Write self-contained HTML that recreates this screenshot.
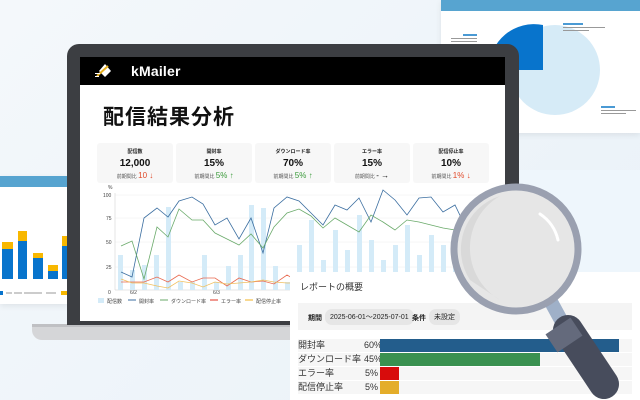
<!DOCTYPE html>
<html><head><meta charset="utf-8"><style>
*{margin:0;padding:0;box-sizing:border-box}
body{width:640px;height:400px;overflow:hidden;position:relative;background:linear-gradient(135deg,#f4f8fb,#e9f1f8);font-family:"Liberation Sans","Noto Sans CJK JP",sans-serif;color:#222}
.abs{position:absolute}
.card{background:#f7f7f7;border-radius:3px;text-align:center;font-size:5px}
.card .t{margin-top:5px;font-weight:bold}
.card .v{font-size:10px;margin-top:3px;font-weight:bold;color:#111}
.card .s{margin-top:2px;font-size:5px;color:#555}
.card .s b{font-size:8px;font-weight:normal}
.row{position:absolute;left:298px;width:334px;height:13px;background:#f6f6f6;font-size:9px;line-height:13px;color:#333}
.row span.p{position:absolute;left:66px;width:14px;text-align:right;font-size:9px}
.row i{position:absolute;left:82px;top:0;height:13px}
</style></head><body>
<!-- top-right card -->
<div class="abs" style="left:441px;top:0;width:199px;height:133px;background:#fff;box-shadow:0 2px 6px rgba(0,0,0,.08)">
 <div style="height:11px;background:#57a4d0"></div>
 <svg class="abs" style="left:0;top:0" width="199" height="133">
  <circle cx="114" cy="70" r="45" fill="#d6ebf7"/>
  <path d="M 102 25 L 102 70 L 48 70 A 45 45 0 0 1 102 25 Z" fill="#0874cc"/>
  <rect x="22" y="34" width="14" height="2" fill="#4a9ad4"/><rect x="10" y="38" width="26" height="1" fill="#999"/><rect x="10" y="41" width="26" height="1" fill="#999"/>
  <rect x="122" y="23" width="20" height="2" fill="#4a9ad4"/><rect x="122" y="27" width="42" height="1" fill="#999"/><rect x="122" y="30" width="26" height="1" fill="#999"/>
  <rect x="160" y="106" width="14" height="2" fill="#4a9ad4"/><rect x="160" y="110" width="35" height="1" fill="#999"/><rect x="160" y="113" width="25" height="1" fill="#999"/>
 </svg>
</div>
<!-- left card -->
<div class="abs" style="left:0;top:176px;width:68px;height:128px;background:#fff;box-shadow:0 2px 6px rgba(0,0,0,.08)">
 <div style="height:11px;background:#57a4d0"></div>
 <svg class="abs" style="left:0;top:0" width="68" height="128">
  <rect x="2" y="66" width="11" height="7" fill="#f8b800"/><rect x="2" y="73" width="11" height="30" fill="#0874cc"/>
  <rect x="18" y="55" width="9" height="10" fill="#f8b800"/><rect x="18" y="65" width="9" height="38" fill="#0874cc"/>
  <rect x="33" y="77" width="10" height="5" fill="#f8b800"/><rect x="33" y="82" width="10" height="21" fill="#0874cc"/>
  <rect x="48" y="89" width="10" height="6" fill="#f8b800"/><rect x="48" y="95" width="10" height="8" fill="#0874cc"/>
  <rect x="62" y="60" width="6" height="10" fill="#f8b800"/><rect x="62" y="70" width="6" height="33" fill="#0874cc"/>
  <rect x="0" y="115" width="3" height="4" fill="#0874cc"/><rect x="6" y="116" width="6" height="2" fill="#ccc"/><rect x="14" y="116" width="8" height="2" fill="#ccc"/><rect x="24" y="116" width="18" height="2" fill="#ccc"/><rect x="46" y="116" width="10" height="2" fill="#ccc"/><rect x="61" y="115" width="7" height="4" fill="#f8b800"/>
 </svg>
</div>
<!-- laptop base -->
<div class="abs" style="left:32px;top:324px;width:300px;height:16px;background:#d5d6d8;border-radius:0 0 10px 10px"></div>
<div class="abs" style="left:32px;top:324px;width:300px;height:3px;background:#bfc0c3"></div>
<!-- bezel -->
<div class="abs" style="left:67px;top:44px;width:452px;height:281px;background:#3c3e42;border-radius:12px 12px 0 0"></div>
<!-- screen -->
<div class="abs" style="left:80px;top:57px;width:425px;height:264px;background:#fff;overflow:hidden">
 <div style="height:28px;background:#000;position:relative">
  <svg class="abs" style="left:14px;top:5px" width="20" height="18"><path d="M5 9 L11 2 L17 9 L11 15 Z" fill="#fff"/><path d="M3 14 L14 4" stroke="#e8b020" stroke-width="2"/><rect x="1" y="11" width="5" height="1" fill="#fff"/><rect x="1" y="14" width="4" height="1" fill="#fff"/></svg>
  <div class="abs" style="left:51px;top:6px;color:#fff;font-size:14px;font-weight:bold;letter-spacing:.2px">kMailer</div>
 </div>
 <div class="abs" style="left:23px;top:44px;font-size:21px;font-weight:bold;color:#111;letter-spacing:1px">配信結果分析</div>
 <div class="abs card" style="left:17px;top:86px;width:76px;height:40px"><div class="t">配信数</div><div class="v">12,000</div><div class="s">前期間比 <b style="color:#e04a2a">10 ↓</b></div></div>
 <div class="abs card" style="left:96px;top:86px;width:76px;height:40px"><div class="t">開封率</div><div class="v">15%</div><div class="s">前期間比 <b style="color:#3a9a3a">5% ↑</b></div></div>
 <div class="abs card" style="left:175px;top:86px;width:76px;height:40px"><div class="t">ダウンロード率</div><div class="v">70%</div><div class="s">前期間比 <b style="color:#3a9a3a">5% ↑</b></div></div>
 <div class="abs card" style="left:254px;top:86px;width:76px;height:40px"><div class="t">エラー率</div><div class="v">15%</div><div class="s">前期間比 <b style="color:#111">- →</b></div></div>
 <div class="abs card" style="left:333px;top:86px;width:76px;height:40px"><div class="t">配信停止率</div><div class="v">10%</div><div class="s">前期間比 <b style="color:#e04a2a">1% ↓</b></div></div>
</div>
<!-- chart -->
<svg class="abs" style="left:0;top:0" width="640" height="400">
 <g font-size="5" fill="#444" font-family="Liberation Sans">
  <text x="108" y="189">%</text><text x="103" y="197">100</text><text x="106" y="220">75</text><text x="106" y="244">50</text><text x="106" y="269">25</text><text x="108" y="294">0</text>
  <text x="130" y="294">6/2</text><text x="213" y="294">6/3</text>
 </g>
 <g stroke="#eee" stroke-width=".5"><line x1="115" y1="195" x2="500" y2="195"/><line x1="115" y1="218" x2="500" y2="218"/><line x1="115" y1="242" x2="500" y2="242"/><line x1="115" y1="267" x2="500" y2="267"/></g>
 <line x1="115" y1="290" x2="500" y2="290" stroke="#ccc" stroke-width=".5"/>
 <line x1="115" y1="193" x2="115" y2="290" stroke="#ccc" stroke-width=".5"/>
 <g fill="#d4ebf8">
  <rect x="118" y="255" width="5" height="35"/><rect x="130" y="270" width="5" height="20"/><rect x="142" y="265" width="5" height="25"/><rect x="154" y="255" width="5" height="35"/><rect x="166" y="207" width="5" height="83"/><rect x="178" y="282" width="5" height="8"/><rect x="190" y="282" width="5" height="8"/><rect x="202" y="255" width="5" height="35"/><rect x="214" y="282" width="5" height="8"/><rect x="226" y="266" width="5" height="24"/><rect x="238" y="255" width="5" height="35"/><rect x="249" y="205" width="5" height="85"/><rect x="261" y="208" width="5" height="82"/><rect x="273" y="266" width="5" height="24"/><rect x="285" y="282" width="5" height="8"/>
  <rect x="297" y="245" width="5" height="45"/><rect x="309" y="220" width="5" height="70"/><rect x="321" y="260" width="5" height="30"/><rect x="333" y="230" width="5" height="60"/><rect x="345" y="250" width="5" height="40"/><rect x="357" y="215" width="5" height="75"/><rect x="369" y="240" width="5" height="50"/><rect x="381" y="260" width="5" height="30"/><rect x="393" y="245" width="5" height="45"/><rect x="405" y="225" width="5" height="65"/><rect x="417" y="255" width="5" height="35"/><rect x="429" y="235" width="5" height="55"/><rect x="441" y="245" width="5" height="45"/><rect x="453" y="240" width="5" height="50"/>
 </g>
 <polyline fill="none" stroke="#3b6ea0" stroke-width=".8" points="121,272 132,277 144,218 157,208 168,217 179,201 192,197 203,204 215,225 227,218 239,239 251,218 263,253 274,208 287,197 299,201 311,213 323,225 335,205 347,210 359,198 371,222 383,190 395,200 407,215 419,198 431,197 443,212 455,205 467,230"/>
 <polyline fill="none" stroke="#6aaa6a" stroke-width=".8" points="121,246 132,241 144,279 157,227 168,237 179,209 192,220 203,220 215,233 227,239 239,245 251,234 263,248 274,227 287,213 299,209 311,216 323,228 335,218 347,225 359,232 371,215 383,222 395,230 407,220 419,222 431,225 443,228 455,230 467,240"/>
 <polyline fill="none" stroke="#e86a50" stroke-width=".8" points="121,282 132,282 144,282 157,277 168,282 179,275 192,282 203,278 215,278 227,286 239,278 251,282 263,281 274,284 287,275 299,282 311,278 323,283 335,279 347,282 359,277 371,283 383,279 395,282 407,278 419,283 431,280 443,282 455,279 467,281"/>
 <polyline fill="none" stroke="#f0c060" stroke-width=".8" points="121,279 132,283 144,283 157,286 168,288 179,281 192,283 203,287 215,282 227,284 239,283 251,282 263,280 274,282 287,283 299,283 311,284 323,281 335,285 347,282 359,283 371,281 383,284 395,282 407,283 419,281 431,284 443,282 455,283 467,282"/>
 <g font-size="5" fill="#444" font-family="Liberation Sans,Noto Sans CJK JP">
  <rect x="98" y="298" width="6" height="5" fill="#d4ebf8"/><text x="107" y="303">配信数</text>
  <line x1="128" y1="300" x2="136" y2="300" stroke="#3b6ea0"/><text x="139" y="303">開封率</text>
  <line x1="160" y1="300" x2="168" y2="300" stroke="#6aaa6a"/><text x="171" y="303">ダウンロード率</text>
  <line x1="210" y1="300" x2="218" y2="300" stroke="#e03020"/><text x="221" y="303">エラー率</text>
  <line x1="245" y1="300" x2="253" y2="300" stroke="#f0b020"/><text x="256" y="303">配信停止率</text>
 </g>
</svg>
<!-- right blue region -->
<div class="abs" style="left:520px;top:170px;width:120px;height:102px;background:#eef6fc"></div>
<!-- report panel -->
<div class="abs" style="left:290px;top:272px;width:350px;height:128px;background:#fff">
 <div class="abs" style="left:10px;top:8px;font-size:9px;color:#333">レポートの概要</div>
 <div class="abs" style="left:8px;top:31px;width:334px;height:27px;background:#f4f4f4;font-size:7px;color:#222">
  <span class="abs" style="left:10px;top:10px;font-weight:bold">期間</span>
  <span class="abs" style="left:27px;top:6px;background:#e6e6e6;border-radius:7px;padding:3px 5px">2025-06-01〜2025-07-01</span>
  <span class="abs" style="left:114px;top:10px;font-weight:bold">条件</span>
  <span class="abs" style="left:131px;top:6px;background:#e6e6e6;border-radius:7px;padding:3px 5px">未設定</span>
 </div>
</div>
<div class="row" style="top:339px">開封率<span class="p">60%</span><i style="width:239px;background:#235d8c"></i></div>
<div class="row" style="top:353px">ダウンロード率<span class="p">45%</span><i style="width:160px;background:#3a9150"></i></div>
<div class="row" style="top:367px">エラー率<span class="p">5%</span><i style="width:19px;background:#d80c0c"></i></div>
<div class="row" style="top:381px">配信停止率<span class="p">5%</span><i style="width:19px;background:#e4ad2a"></i></div>
<!-- magnifier -->
<svg class="abs" style="left:0;top:0" width="640" height="400">
 <line x1="550" y1="300" x2="562" y2="322" stroke="#9fb0c8" stroke-width="14"/>
 <line x1="568" y1="330" x2="604" y2="384" stroke="#474c5c" stroke-width="30" stroke-linecap="round"/>
 <line x1="558" y1="326" x2="570" y2="344" stroke="#646a7c" stroke-width="30"/>
 <circle cx="516" cy="249" r="62" fill="#e6e6e6" stroke="#9aa0b0" stroke-width="7"/>
 <path d="M 470 280 A 56 56 0 0 1 500 196 A 60 60 0 0 0 500 300 Z" fill="#d9d9d9"/>
 <path d="M 540 214 A 42 42 0 0 1 558 240" fill="none" stroke="#fff" stroke-width="3" stroke-linecap="round"/>
</svg>
</body></html>
